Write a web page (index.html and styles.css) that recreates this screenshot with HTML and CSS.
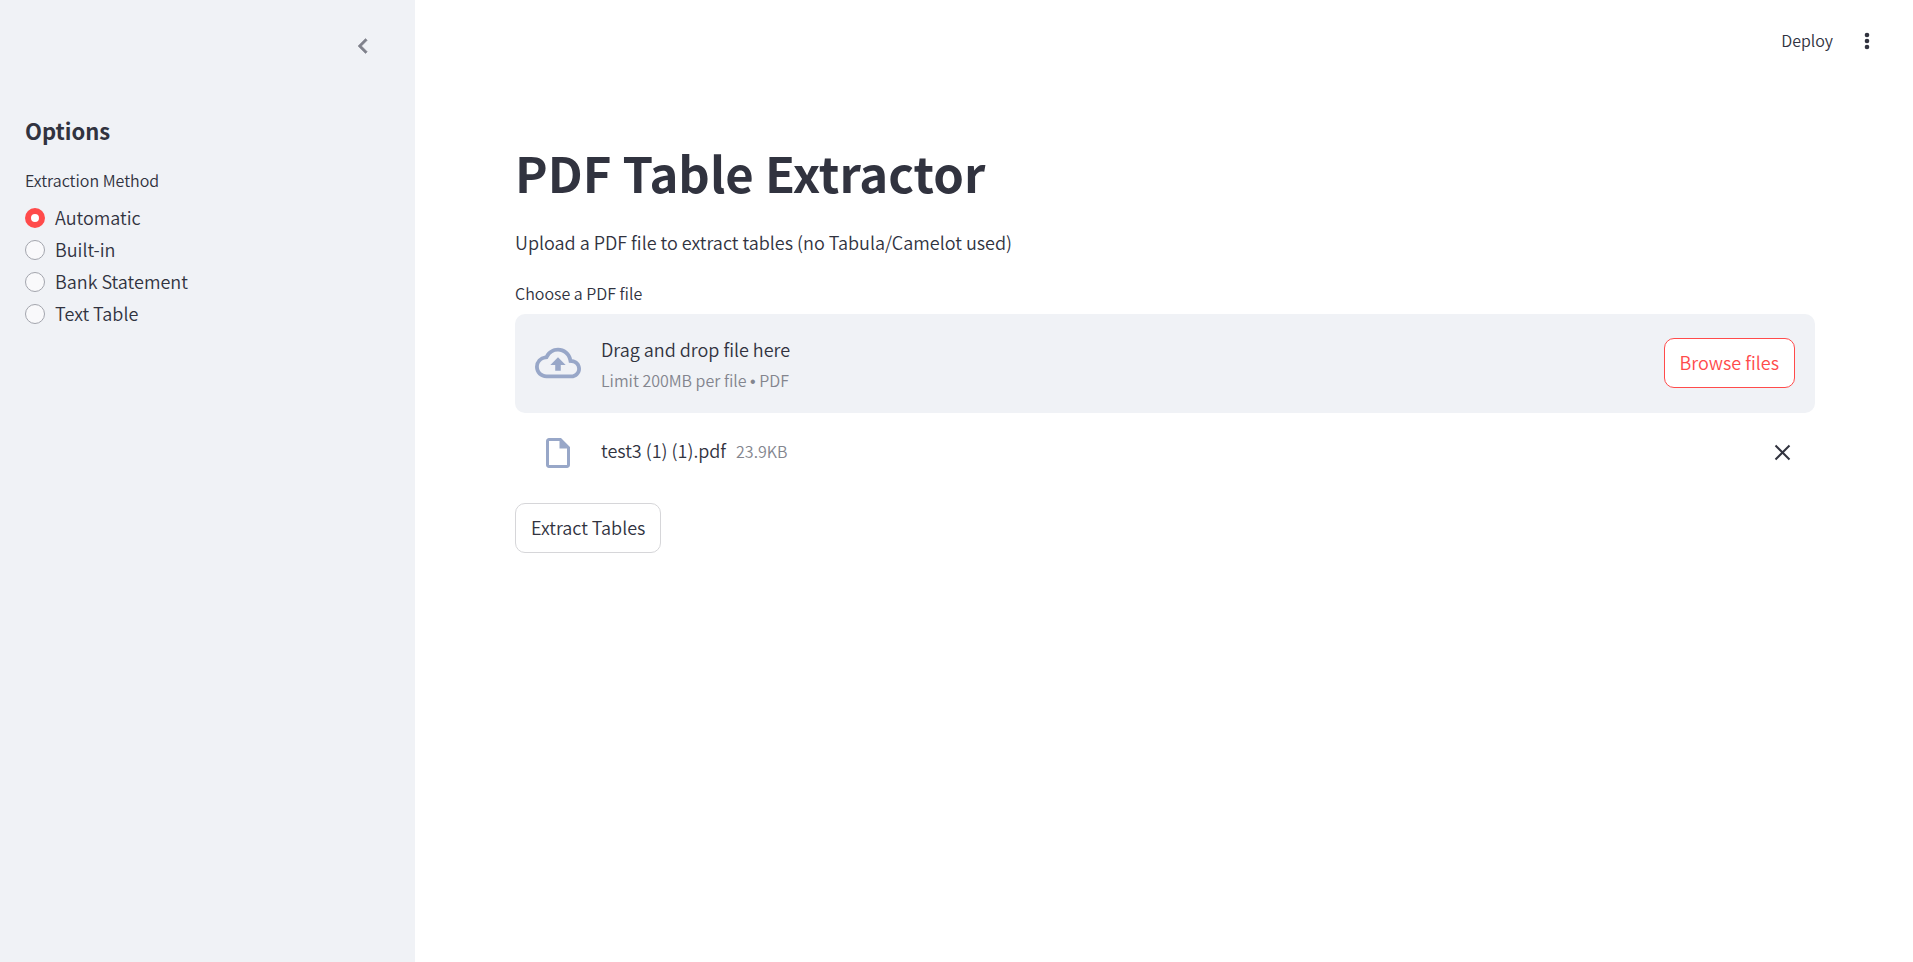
FILE: index.html
```html
<!DOCTYPE html>
<html lang="en">
<head>
<meta charset="utf-8">
<title>PDF Table Extractor</title>
<link rel="stylesheet" href="styles.css">
</head>
<body>
<div class="app">
  <aside class="sidebar">
    <div class="sidebar-header">
      <button class="icon-button collapse" type="button" aria-label="Collapse sidebar">
        <svg viewBox="0 0 24 24" width="30" height="30" fill="currentColor" stroke="currentColor" stroke-width=".4"><path d="M15.41 7.41 14 6l-6 6 6 6 1.41-1.41L10.83 12z"/></svg>
      </button>
    </div>
    <h2 class="sidebar-title">Options</h2>
    <fieldset class="radio-group">
      <legend class="label">Extraction Method</legend>
      <label class="radio"><input type="radio" name="method" checked><span class="radio-text">Automatic</span></label>
      <label class="radio"><input type="radio" name="method"><span class="radio-text">Built-in</span></label>
      <label class="radio"><input type="radio" name="method"><span class="radio-text">Bank Statement</span></label>
      <label class="radio"><input type="radio" name="method"><span class="radio-text">Text Table</span></label>
    </fieldset>
  </aside>
  <div class="page">
    <header class="toolbar">
      <button class="deploy" type="button">Deploy</button>
      <button class="icon-button" type="button" aria-label="Main menu">
        <svg viewBox="0 0 30 30" width="30" height="30" fill="currentColor"><circle cx="15" cy="9" r="2.3"/><circle cx="15" cy="15" r="2.3"/><circle cx="15" cy="21" r="2.3"/></svg>
      </button>
    </header>
    <main class="content">
      <h1 class="title">PDF Table Extractor</h1>
      <p class="intro">Upload a PDF file to extract tables (no Tabula/Camelot used)</p>
      <div class="label" id="upload-label">Choose a PDF file</div>
      <section class="dropzone" aria-labelledby="upload-label">
        <svg class="cloud" viewBox="0 0 24 24" width="46" height="46" fill="currentColor"><path d="M19.35 10.04A7.49 7.49 0 0 0 12 4C9.11 4 6.6 5.64 5.35 8.04A5.994 5.994 0 0 0 0 14c0 3.31 2.69 6 6 6h13c2.76 0 5-2.24 5-5 0-2.64-2.05-4.78-4.65-4.96zM19 18H6c-2.21 0-4-1.79-4-4 0-2.05 1.53-3.76 3.56-3.97l1.07-.11.5-.95A5.469 5.469 0 0 1 12 6c2.62 0 4.88 1.86 5.39 4.43l.3 1.5 1.53.11A2.98 2.98 0 0 1 22 15c0 1.65-1.35 3-3 3zM8 13h2.55v3h2.9v-3H16l-4-4z"/></svg>
        <div class="drop-text">
          <span class="drop-main">Drag and drop file here</span>
          <span class="hint">Limit 200MB per file <span class="bullet">•</span> PDF</span>
        </div>
        <button class="button primary" type="button">Browse files</button>
      </section>
      <div class="file">
        <div class="file-icon">
          <svg viewBox="0 0 24 24" width="36" height="36" fill="currentColor"><path d="M14 2H6c-1.1 0-1.99.9-1.99 2L4 20c0 1.1.89 2 1.99 2H18c1.1 0 2-.9 2-2V8l-6-6zM6 20V4h7v5h5v11H6z"/></svg>
        </div>
        <div class="file-text">
          <span>test3 (1) (1).pdf</span>
          <span class="hint">23.9KB</span>
        </div>
        <button class="icon-button" type="button" aria-label="Remove file">
          <svg viewBox="0 0 25 25" width="25" height="25" fill="none" stroke="currentColor" stroke-width="2"><path d="M5.5 5.5l14 14M19.5 5.5l-14 14"/></svg>
        </button>
      </div>
      <button class="button" type="button">Extract Tables</button>
    </main>
  </div>
</div>
</body>
</html>
```
FILE: styles.css
```css
* {
  box-sizing: border-box;
}

body {
  margin: 0;
  color: #31333f;
  background: #fff;
  font-family: "Noto Sans CJK SC", "Noto Sans", sans-serif;
  font-size: 18px;
  font-weight: 350;
  line-height: 32px;
}

button {
  margin: 0;
  padding: 0;
  border: 0;
  background: none;
  color: inherit;
  font: inherit;
  cursor: pointer;
}

svg {
  display: block;
}

.app {
  display: flex;
  min-height: 100vh;
}

.sidebar {
  flex: 0 0 415px;
  padding: 0 25px;
  background: #f0f2f6;
}

.sidebar-header {
  display: flex;
  justify-content: flex-end;
  height: 115px;
  padding: 31px 12px 0 0;
}

.icon-button {
  align-self: center;
}

.collapse {
  align-self: flex-start;
  color: #7f818b;
}

.sidebar-title {
  margin: 0 0 22px;
  font-size: 22px;
  font-weight: 700;
  line-height: 30px;
}

.label {
  padding: 0;
  font-size: 16px;
  line-height: 26px;
}

.radio-group {
  margin: 0;
  padding: 0;
  border: 0;
}

.radio-group .label {
  margin-bottom: 9px;
}

.radio {
  display: flex;
  align-items: center;
  gap: 10px;
}

.radio input {
  appearance: none;
  width: 20px;
  height: 20px;
  margin: 0;
  border: 1px solid #a3a5ad;
  border-radius: 50%;
  background: #f9f9fb;
}

.radio input:checked {
  border: 6px solid #ff4b4b;
  background: #fff;
}

.radio-text {
  padding-bottom: 2px;
  line-height: 30px;
}

.page {
  flex: 1;
  min-width: 0;
}

.toolbar {
  display: flex;
  justify-content: flex-end;
  align-items: center;
  gap: 19px;
  height: 82px;
  padding: 0 31px 0 30px;
}

.deploy {
  padding-bottom: 2px;
  font-size: 16px;
}

.content {
  padding: 57px 98px 40px 100px;
}

.title {
  margin: 0 0 21px;
  font-size: 49px;
  font-weight: 700;
  line-height: 66px;
}

.intro {
  margin: 0 0 22px;
}

.dropzone {
  display: flex;
  align-items: center;
  gap: 20px;
  min-height: 99px;
  margin-top: 8px;
  padding: 0 20px 1px;
  border-radius: 10px;
  background: #f0f2f6;
}

.cloud,
.file-icon {
  flex: none;
  color: #98a7c8;
}

.drop-text {
  display: flex;
  flex: 1;
  flex-direction: column;
  gap: 1px;
  padding-top: 3px;
}

.drop-main {
  line-height: 31px;
}

.hint {
  color: #83858e;
  font-size: 16px;
  line-height: 29px;
}

.bullet {
  font-family: "Liberation Sans", sans-serif;
}

.button {
  height: 50px;
  padding: 0 15px 2px;
  border: 1px solid #d6d6d9;
  border-radius: 10px;
  background: #fff;
}

.primary {
  border-color: #ff4b4b;
  color: #ff4b4b;
}

.file {
  display: flex;
  align-items: center;
  gap: 20px;
  height: 39px;
  margin: 20px 0 31px;
  padding: 0 20px;
}

.file-icon {
  display: flex;
  justify-content: center;
  width: 46px;
}

.file-text {
  display: flex;
  flex: 1;
  align-items: baseline;
  gap: 10px;
  padding-bottom: 5px;
}
```
